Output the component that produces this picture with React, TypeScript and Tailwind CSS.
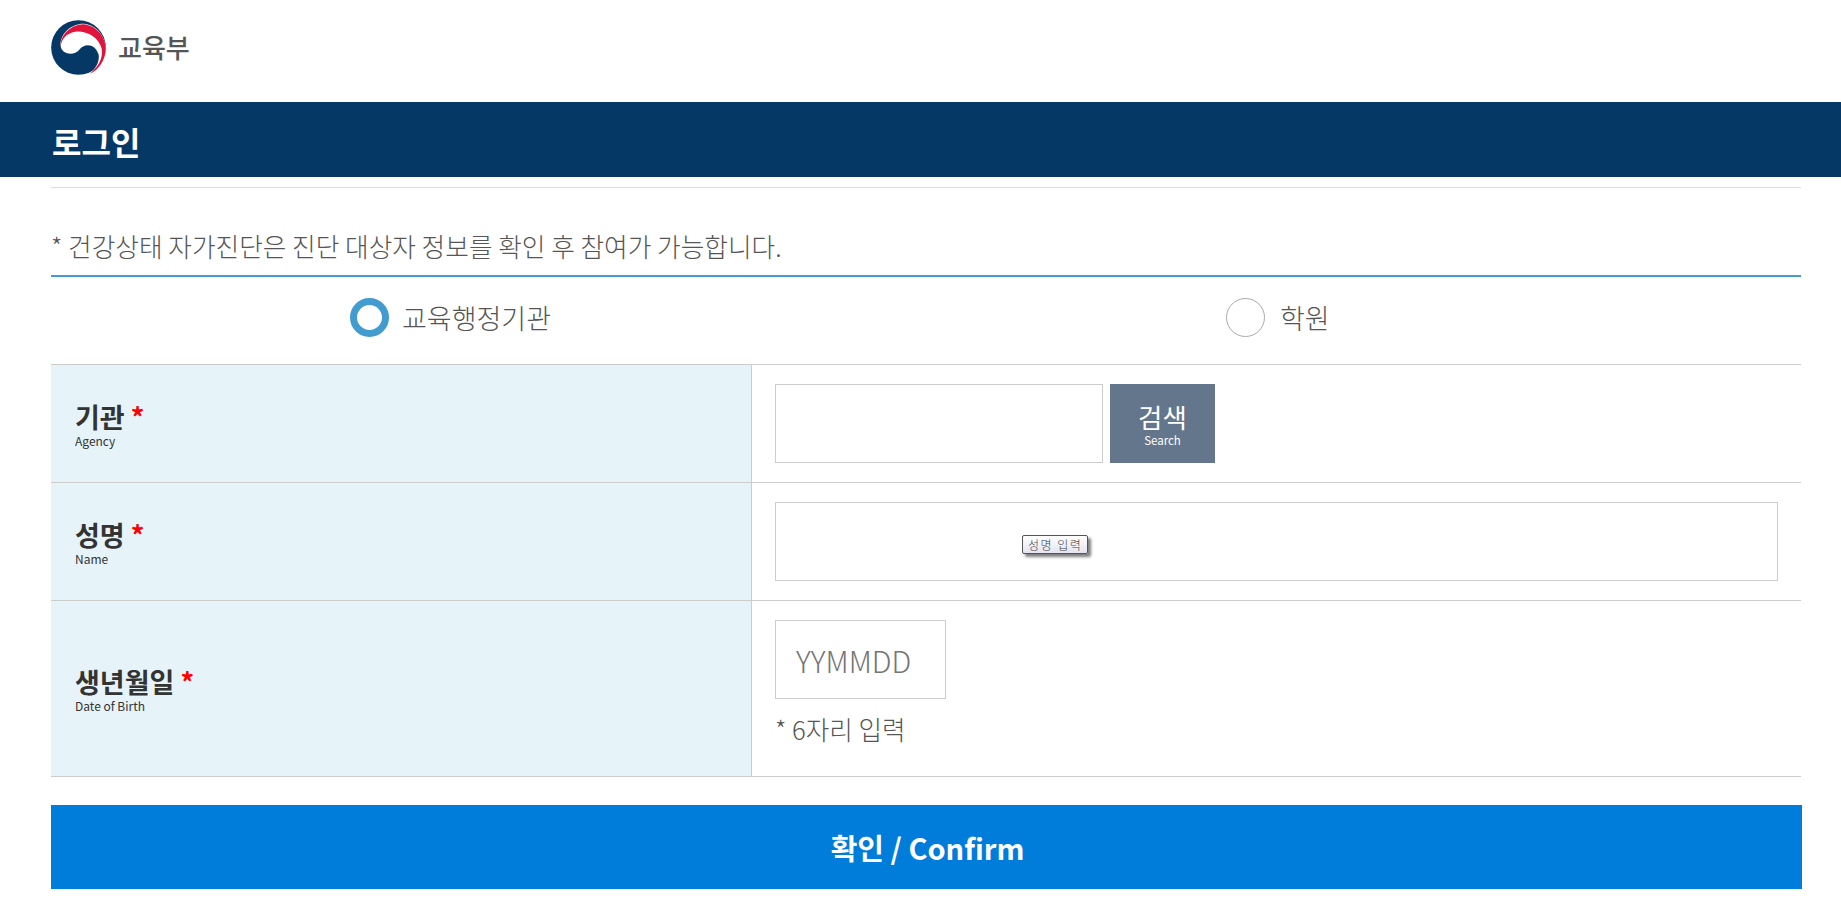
const font = "font-['Noto_Sans_CJK_KR','Noto_Sans',sans-serif]";

const Logo = () => (
  <svg viewBox="33 14 165 165" className="h-[55px] w-[55px]">
    <circle cx="115.5" cy="96.5" r="82" fill="#063866" />
    <path
      d="M62 92C64 115 100 125 118 103C132 84 165 82 176 118C179 140 167 160 148 176C178 165 197 130 197 100C197 70 175 28 130 25C95 25 58 55 62 92Z"
      fill="#fff"
    />
    <path
      d="M62 92C60 60 92 28 130 27C172 30 198 70 197 100C197 130 178 165 148 176C174 155 190 130 185 100C177 64 135 44 105 49C80 54 65 70 62 92Z"
      fill="#e0143c"
    />
  </svg>
);

const FormRow = ({
  title,
  sub,
  children,
  heightClass
}: {
  title: string;
  sub: string;
  children: React.ReactNode;
  heightClass: string;
}) => (
  <div className={`flex border-b border-[#cccccc] ${heightClass}`}>
    <div className="flex w-[701px] flex-col justify-center border-r border-[#cccccc] bg-[#e6f3f8] pl-6">
      <div className="text-[27px] font-bold leading-[34px] text-[#333333]">
        {title} <span className="text-[#ff0000]">*</span>
      </div>
      <div className="text-[12px] leading-[14px] text-[#333333]">{sub}</div>
    </div>
    <div className="relative flex-1 px-[23px] pt-[19px]">{children}</div>
  </div>
);

export default function App() {
  return (
    <div className={`${font} min-h-[914px] bg-white`}>
      <header className="flex h-[102px] items-center gap-3 pb-[8px] pl-[51px]">
        <Logo />
        <span className="text-[26px] font-medium leading-none text-[#555555]">교육부</span>
      </header>
      <div className="flex h-[75px] items-center bg-[#063866] pl-[52px] pt-[2px] text-[32px] font-bold text-white">로그인</div>
      <main className="mx-[51px] w-[1750px] pt-[10px]">
        <div className="border-t border-[#dddddd] pb-[9px] pt-[38px]">
          <p className="text-[25.7px] font-light leading-[40px] text-[#555555]">
            * 건강상태 자가진단은 진단 대상자 정보를 확인 후 참여가 가능합니다.
          </p>
        </div>
        <div className="flex h-[89px] border-t-2 border-[#429cd0]">
          <div className="flex w-1/2 items-center gap-[13px] pb-[6px] pl-[299px]">
            <span className="h-[39px] w-[39px] rounded-full border-[7px] border-[#429cd0] bg-white" />
            <span className="text-[27px] font-light leading-[36px] text-[#555555]">교육행정기관</span>
          </div>
          <div className="flex w-1/2 items-center gap-[15px] pb-[6px] pl-[300px]">
            <span className="h-[39px] w-[39px] rounded-full border border-[#aaaaaa] bg-white" />
            <span className="text-[27px] font-light leading-[36px] text-[#555555]">학원</span>
          </div>
        </div>
        <div className="border-t border-[#cccccc]">
          <FormRow title="기관" sub="Agency" heightClass="h-[118px]">
            <div className="flex gap-[7px]">
              <input className="h-[79px] w-[328px] border border-[#cccccc] bg-white outline-none" />
              <button className="flex h-[79px] w-[105px] flex-col items-center justify-center bg-[#64768c] pt-[3px] text-white">
                <span className="text-[26.5px] leading-[30px]">검색</span>
                <span className="text-[11.5px] leading-[16px]">Search</span>
              </button>
            </div>
          </FormRow>
          <FormRow title="성명" sub="Name" heightClass="h-[118px]">
            <input className="h-[79px] w-full border border-[#cccccc] bg-white outline-none" />
            <div className="absolute left-[270px] top-[52px] whitespace-nowrap rounded-[2px] border border-[#555555] bg-gradient-to-b from-white to-[#e4e4f0] px-[5px] text-[12px] font-light leading-[17px] tracking-[1.5px] text-[#444444] shadow-[3px_3px_3px_rgba(0,0,0,0.5)]">
              성명 입력
            </div>
          </FormRow>
          <FormRow title="생년월일" sub="Date of Birth" heightClass="h-[176px]">
            <input
              placeholder="YYMMDD"
              className="h-[79px] w-[171px] border border-[#cccccc] bg-white px-5 text-[29.4px] font-light outline-none placeholder:text-[#757575]"
            />
            <p className="mt-[12px] text-[25.6px] font-light leading-[36px] text-[#555555]">* 6자리 입력</p>
          </FormRow>
        </div>
        <button className="mt-[28px] flex h-[84px] w-[1751px] items-center justify-center bg-[#007cdb] pl-[2px] pt-[1px] text-[29px] font-bold text-white">
          확인 / Confirm
        </button>
      </main>
    </div>
  );
}
